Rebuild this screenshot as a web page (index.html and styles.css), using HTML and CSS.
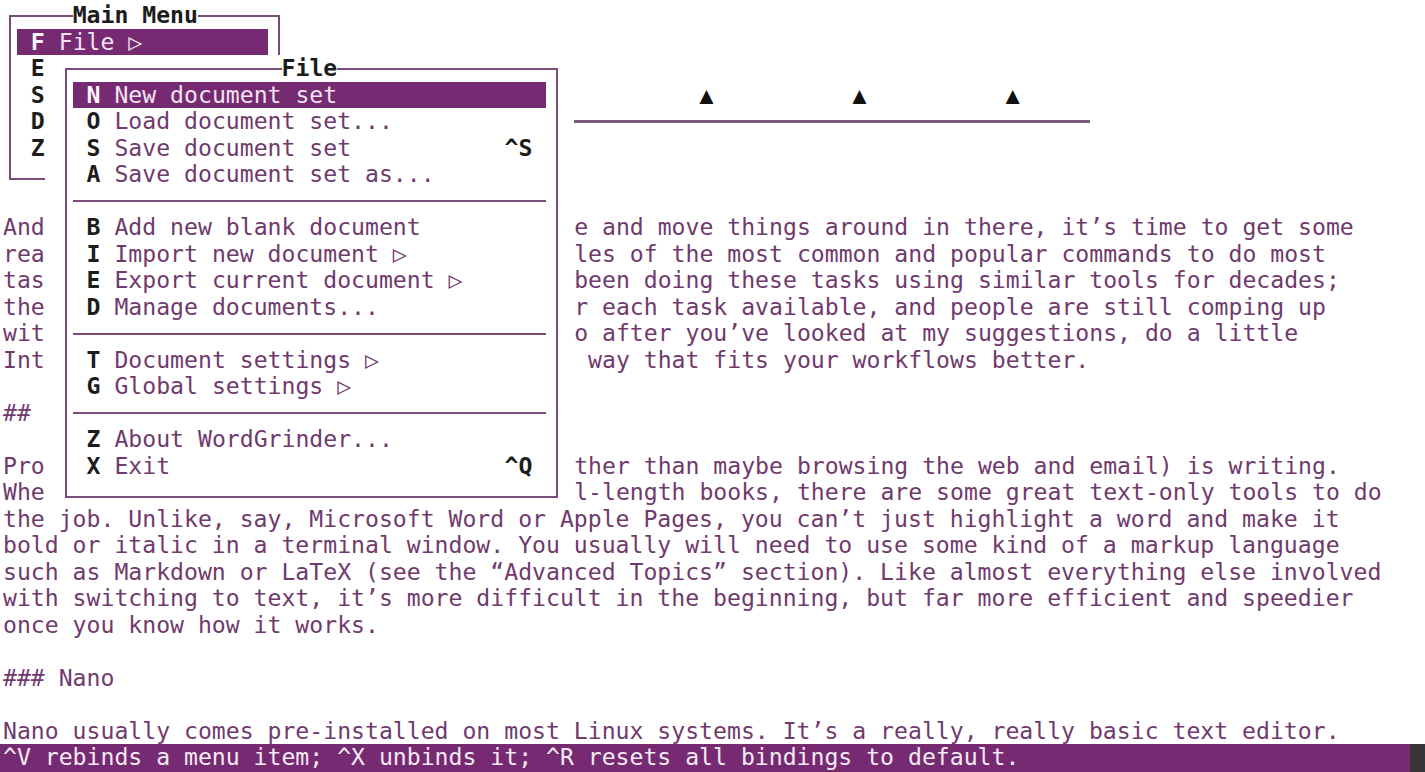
FILE: index.html
```html
<!DOCTYPE html>
<html lang="en">
<head>
<meta charset="utf-8">
<title>WordGrinder</title>
<link rel="stylesheet" href="styles.css">
</head>
<body>
<div class="screen">
  <div class="doc">
    <div class="line"></div>
    <div class="line"></div>
    <div class="line"></div>
    <div class="line marks"><span>         ▲          ▲          ▲</span></div>
    <div class="line ruler"><span class="ruler-bar"></span></div>
    <div class="line"></div>
    <div class="line"></div>
    <div class="line"></div>
    <div class="line split"><span>And</span><span>e and move things around in there, it’s time to get some</span></div>
    <div class="line split"><span>rea</span><span>les of the most common and popular commands to do most</span></div>
    <div class="line split"><span>tas</span><span>been doing these tasks using similar tools for decades;</span></div>
    <div class="line split"><span>the</span><span>r each task available, and people are still comping up</span></div>
    <div class="line split"><span>wit</span><span>o after you’ve looked at my suggestions, do a little</span></div>
    <div class="line split"><span>Int</span><span> way that fits your workflows better.</span></div>
    <div class="line"></div>
    <div class="line">##</div>
    <div class="line"></div>
    <div class="line split"><span>Pro</span><span>ther than maybe browsing the web and email) is writing.</span></div>
    <div class="line split"><span>Whe</span><span>l-length books, there are some great text-only tools to do</span></div>
    <div class="line">the job. Unlike, say, Microsoft Word or Apple Pages, you can’t just highlight a word and make it</div>
    <div class="line">bold or italic in a terminal window. You usually will need to use some kind of a markup language</div>
    <div class="line">such as Markdown or LaTeX (see the “Advanced Topics” section). Like almost everything else involved</div>
    <div class="line">with switching to text, it’s more difficult in the beginning, but far more efficient and speedier</div>
    <div class="line">once you know how it works.</div>
    <div class="line"></div>
    <div class="line">### Nano</div>
    <div class="line"></div>
    <div class="line">Nano usually comes pre-installed on most Linux systems. It’s a really, really basic text editor.</div>
  </div>
  <div class="status"><span class="status-text">^V rebinds a menu item; ^X unbinds it; ^R resets all bindings to default.</span><span class="status-end"></span></div>

  <div class="menu main-menu">
    <div class="mrow mtitle"><span class="title">Main Menu</span></div>
    <div class="mrow item on"><span><b class="key">F</b> File ▷</span></div>
    <div class="mrow item"><b class="key">E</b></div>
    <div class="mrow item"><b class="key">S</b></div>
    <div class="mrow item"><b class="key">D</b></div>
    <div class="mrow item"><b class="key">Z</b></div>
    <div class="mrow"></div>
  </div>

  <div class="menu file-menu">
    <div class="mrow ftitle"><span class="title">File</span></div>
    <div class="mrow item on"><span><b class="key">N</b> New document set</span></div>
    <div class="mrow item"><span><b class="key">O</b> Load document set...</span></div>
    <div class="mrow item"><span><b class="key">S</b> Save document set</span><b class="sc">^S</b></div>
    <div class="mrow item"><span><b class="key">A</b> Save document set as...</span></div>
    <div class="mrow sep"></div>
    <div class="mrow item"><span><b class="key">B</b> Add new blank document</span></div>
    <div class="mrow item"><span><b class="key">I</b> Import new document ▷</span></div>
    <div class="mrow item"><span><b class="key">E</b> Export current document ▷</span></div>
    <div class="mrow item"><span><b class="key">D</b> Manage documents...</span></div>
    <div class="mrow sep"></div>
    <div class="mrow item"><span><b class="key">T</b> Document settings ▷</span></div>
    <div class="mrow item"><span><b class="key">G</b> Global settings ▷</span></div>
    <div class="mrow sep"></div>
    <div class="mrow item"><span><b class="key">Z</b> About WordGrinder...</span></div>
    <div class="mrow item"><span><b class="key">X</b> Exit</span><b class="sc">^Q</b></div>
    <div class="mrow"></div>
  </div>
</div>
</body>
</html>
```

FILE: styles.css
```css
:root {
  --cw: 13.93px;
  --lh: 26.5px;
  --purple: #762a72;
  --ink: #703a6d;
  --rule: #7b4c79;
  --key: #1c1c1c;
}

* { box-sizing: border-box; }

html, body {
  margin: 0;
  background: #fff;
}

body {
  font-family: "DejaVu Sans Mono", "Liberation Mono", monospace;
  font-size: 23.14px;
  line-height: var(--lh);
  color: var(--ink);
}

.screen {
  position: relative;
  width: 1425px;
  height: 772px;
  overflow: hidden;
  display: flex;
  flex-direction: column;
  padding-top: 2.25px;
}

.doc {
  padding-left: 3px;
}

.line {
  height: var(--lh);
  white-space: pre;
}

.split {
  display: grid;
  grid-template-columns: calc(41 * var(--cw)) auto;
}

.marks {
  padding-left: calc(41 * var(--cw));
  color: #111;
}

.ruler {
  padding-left: calc(41 * var(--cw));
  display: flex;
  align-items: center;
}

.ruler-bar {
  width: calc(37 * var(--cw));
  height: 3px;
  background: #7d5a7c;
}

.status {
  flex: 1;
  display: flex;
  background: var(--purple);
  color: #f4eaf3;
  white-space: pre;
}

.status-text {
  flex: 1;
  padding-left: 3px;
}

.status-end {
  width: 15px;
  background: #363636;
}

/* menus overlay the document */
.menu {
  position: absolute;
  background: #fff;
}

.menu::before {
  content: "";
  position: absolute;
  border: 2px solid var(--rule);
}

.main-menu {
  left: 3px;
  top: 2.25px;
  width: calc(21 * var(--cw));
  height: calc(7 * var(--lh));
}

.main-menu::before {
  left: calc(var(--cw) / 2 - 1px);
  top: calc(var(--lh) / 2 - 1px);
  width: calc(19 * var(--cw) + 2px);
  height: calc(6 * var(--lh) + 2px);
}

.file-menu {
  left: calc(3px + 3 * var(--cw));
  top: calc(2.25px + 2 * var(--lh));
  width: calc(38 * var(--cw));
  height: calc(17 * var(--lh));
}

.file-menu::before {
  left: calc(1.5 * var(--cw) - 1px);
  top: calc(var(--lh) / 2 - 1px);
  width: calc(35 * var(--cw) + 2px);
  height: calc(16 * var(--lh) + 2px);
}

.mrow {
  position: relative;
  height: var(--lh);
  white-space: pre;
}

.title {
  background: #fff;
  font-weight: bold;
  color: var(--key);
}

.main-menu .mtitle {
  padding-left: calc(5 * var(--cw));
}

.file-menu .ftitle {
  padding-left: calc(17 * var(--cw));
}

.main-menu .item {
  margin-left: var(--cw);
  width: calc(18 * var(--cw));
  padding-left: var(--cw);
}

.file-menu .item {
  margin-left: calc(2 * var(--cw));
  width: calc(34 * var(--cw));
  padding: 0 var(--cw);
  display: flex;
  justify-content: space-between;
}

.key,
.sc {
  font-weight: bold;
  color: var(--key);
}

.item.on {
  background: var(--purple);
  color: #f1e4f0;
}

.item.on .key {
  color: #fbf6fb;
}

.sep {
  margin-left: calc(2 * var(--cw));
  width: calc(34 * var(--cw));
}

.sep::after {
  content: "";
  position: absolute;
  left: 0;
  right: 0;
  top: calc(50% - 1px);
  border-top: 2px solid var(--rule);
}
```
